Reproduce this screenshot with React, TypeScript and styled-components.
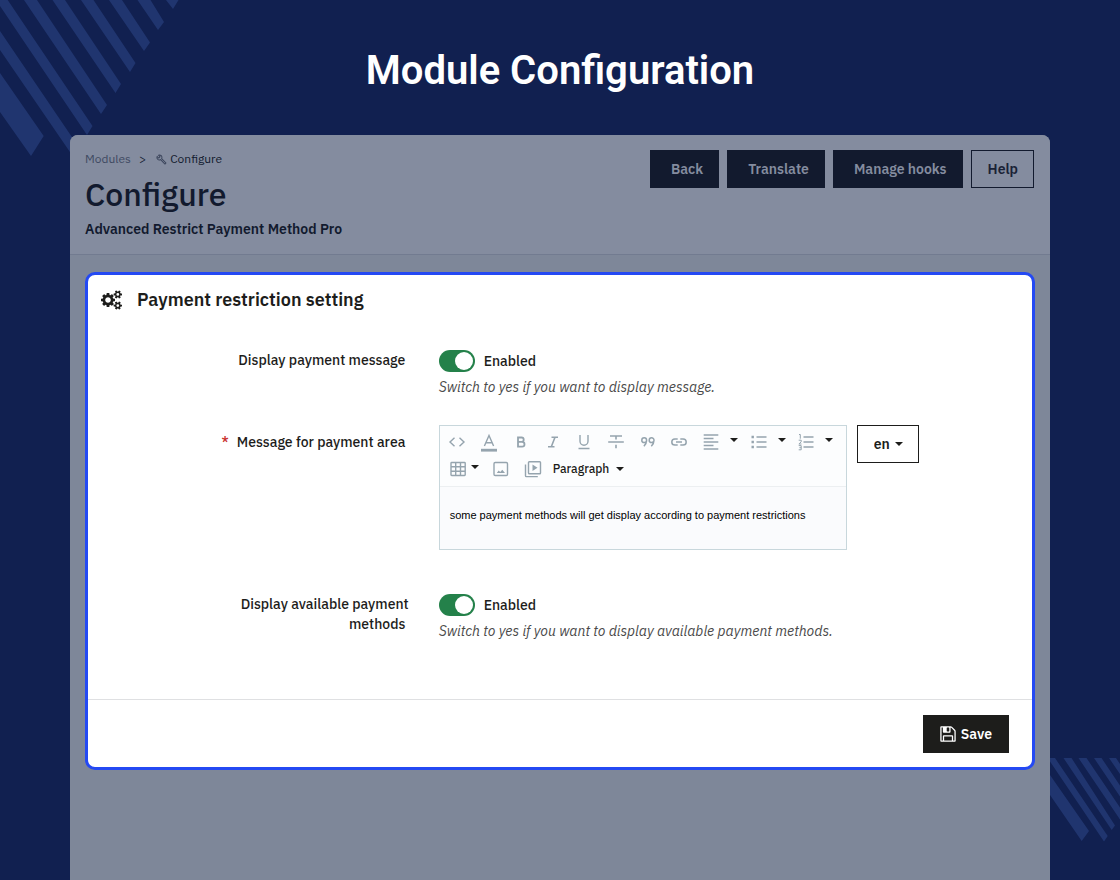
import React from "react";
import styled, { createGlobalStyle } from "styled-components";
import { MdOutlineBuild } from "react-icons/md";

const GlobalStyle = createGlobalStyle`
  *, *::before, *::after { box-sizing: border-box; }
  body {
    margin: 0;
    background: #112050;
    font-family: "IBM Plex Sans", "Noto Sans", sans-serif;
    font-size: 14px;
    line-height: 20px;
    color: #1d1d1b;
  }
  button, input, select, textarea { font: inherit; color: inherit; margin: 0; }
`;

const Page = styled.div`
  position: relative;
  display: flex;
  flex-direction: column;
  min-height: 100vh;
  overflow: hidden;
`;

const Stripes = styled.svg<{ $corner: "left" | "right" }>`
  position: absolute;
  top: ${(p) => (p.$corner === "left" ? "0" : "758px")};
  ${(p) => p.$corner}: 0;
  fill: #20356f;
`;

const Title = styled.h1`
  margin: 0;
  padding: 41px 16px 34px;
  font-family: Roboto, sans-serif;
  font-size: 40px;
  font-weight: 600;
  line-height: 60px;
  text-align: center;
  color: #fff;
`;

const Panel = styled.main`
  position: relative;
  flex: 1;
  margin: 0 70px;
  border-radius: 8px 8px 0 0;
  background: #7e8799;
  overflow: hidden;
`;

const PanelHeader = styled.header`
  display: flex;
  justify-content: space-between;
  align-items: flex-start;
  padding: 14px 16px 15px 15px;
  border-bottom: 1px solid #727b90;
  background: #848c9f;
  color: #121a2e;
`;

const Breadcrumb = styled.nav`
  display: flex;
  align-items: center;
  gap: 8px;
  font-size: 12px;
`;

const CrumbLink = styled.a`
  color: #3f4a62;
  text-decoration: none;
`;

const CrumbCurrent = styled.span`
  display: flex;
  align-items: center;
  gap: 3px;
  padding-left: 2px;

  svg { color: #39435a; }
`;

const PageName = styled.h2`
  margin: 5px 0;
  font-size: 32px;
  font-weight: 500;
  line-height: 40px;
`;

const ModuleName = styled.p`
  margin: 0;
  font-weight: 600;
`;

const Actions = styled.div`
  display: flex;
  gap: 8px;
  padding-top: 1px;
`;

const ActionButton = styled.button<{ $outline?: boolean }>`
  height: 38px;
  padding: ${(p) => (p.$outline ? "0 15px 0 16px" : "0 15px 0 20px")};
  border: 1px solid #121a2e;
  background: ${(p) => (p.$outline ? "transparent" : "#121a2e")};
  color: ${(p) => (p.$outline ? "#1a2236" : "#848c9f")};
  font-weight: 600;
`;

const Card = styled.form`
  margin: 17px 15px;
  border: 3px solid #2449f3;
  border-radius: 10px;
  background: #fff;
`;

const CardTitle = styled.h3`
  display: flex;
  align-items: center;
  gap: 15px;
  margin: 0;
  padding: 0 13px;
  font-size: 18px;
  font-weight: 600;
  line-height: 50px;
`;

const Rows = styled.div`
  display: flex;
  flex-direction: column;
  gap: 27px;
  padding: 25px 0 57px 24px;
`;

const Row = styled.div<{ $tall?: boolean }>`
  display: grid;
  grid-template-columns: 1fr 2fr;
  column-gap: 30px;
  padding-bottom: ${(p) => (p.$tall ? "17px" : "0")};
`;

const FieldLabel = styled.label<{ $tall?: boolean }>`
  justify-self: end;
  max-width: 200px;
  padding-top: ${(p) => (p.$tall ? "7px" : "0")};
  font-weight: 500;
  text-align: right;
`;

const Required = styled.span`
  margin-right: 8px;
  color: #c9302c;
`;

const SwitchLine = styled.label`
  display: flex;
  align-items: center;
  gap: 9px;
  height: 22px;
  font-weight: 500;
`;

const Switch = styled.input`
  appearance: none;
  display: flex;
  align-items: center;
  width: 36px;
  height: 22px;
  padding: 2px;
  border-radius: 11px;
  background: #b3c7cd;

  &::before {
    content: "";
    width: 18px;
    height: 18px;
    border-radius: 50%;
    background: #fff;
  }
  &:checked { justify-content: flex-end; background: #24814a; }
`;

const Help = styled.p`
  margin: 4px 0 0;
  font-style: italic;
  line-height: 22px;
  color: #4a4a4a;
`;

const MessageField = styled.div`
  display: flex;
  align-items: flex-start;
  gap: 10px;
`;

const Editor = styled.div`
  flex: 1;
  max-width: 408px;
  border: 1px solid #c8d7dc;
  background: #fcfdfe;
`;

const Toolbar = styled.div`
  padding: 0 8px 6px 2px;
  border-bottom: 1px solid #eceff1;
  color: #95a4ae;
`;

const ToolGrid = styled.div`
  display: grid;
  grid-template-columns: repeat(25, 1fr);
  height: 32px;
`;

const ToolRow = styled.div`
  display: flex;
  height: 22px;
`;

const Tool = styled.button<{ $menu?: boolean; $fixed?: boolean }>`
  display: flex;
  align-items: center;
  justify-content: ${(p) => (p.$menu ? "flex-start" : "center")};
  gap: ${(p) => (p.$fixed ? "4px" : "10px")};
  grid-column: span ${(p) => (p.$menu ? 3 : 2)};
  width: ${(p) => (p.$fixed ? (p.$menu ? "43px" : "32px") : "auto")};
  padding: 0 0 0 ${(p) => (p.$menu ? "7px" : "0")};
  border: 0;
  background: none;
`;

const Glyph = styled.svg`
  flex: none;
  width: 18px;
  height: 18px;
  fill: none;
  stroke: #95a4ae;
  stroke-width: 1.4;
  overflow: visible;
`;

const CaretShape = styled.svg<{ $raised?: boolean }>`
  flex: none;
  width: 8px;
  height: 4px;
  margin-bottom: ${(p) => (p.$raised ? "4px" : "0")};
  fill: #1d1d1b;
`;

const SelectBox = styled.div<{ $bordered?: boolean }>`
  display: flex;
  align-items: center;
  height: ${(p) => (p.$bordered ? "38px" : "22px")};
  padding: ${(p) => (p.$bordered ? "0 15px 0 16px" : "0 4px")};
  border: ${(p) => (p.$bordered ? "1px solid #1d1d1b" : "0")};
  color: #1d1d1b;
`;

const PlainSelect = styled.select<{ $strong?: boolean }>`
  appearance: none;
  margin-right: ${(p) => (p.$strong ? "4px" : "6px")};
  padding: 0;
  border: 0;
  background: none;
  font-size: ${(p) => (p.$strong ? "14px" : "12px")};
  font-weight: ${(p) => (p.$strong ? 600 : 500)};
`;

const MessageText = styled.textarea`
  display: block;
  width: 100%;
  height: 62px;
  padding: 18px 10px;
  border: 0;
  resize: none;
  background: #fafbfd;
  color: #000;
  font-family: "Liberation Sans", Arial, sans-serif;
  font-size: 11px;
  line-height: 20px;
`;

const CardFooter = styled.footer`
  display: flex;
  justify-content: flex-end;
  padding: 15px 23px 14px;
  border-top: 1px solid #dfe0e2;
`;

const SaveButton = styled.button`
  display: flex;
  align-items: center;
  gap: 5px;
  height: 38px;
  padding: 0 16px;
  border: 1px solid #1d1d1b;
  background: #1d1d1b;
  color: #fff;
  font-weight: 600;
`;

const Caret = ({ raised }: { raised?: boolean }) => (
  <CaretShape $raised={raised} viewBox="0 0 8 4" aria-hidden="true">
    <path d="M0 0h8L4 4z" />
  </CaretShape>
);

const smallGear =
  "v140q0 16-149 31-12 27-30 52 51 113 51 138 0 4-4 7-122 71-124 71-8 0-46-47t-52-68q-20 2-30 2t-30-2q-14 21-52 68t-46 47q-2 0-124-71-4-3-4-7 0-25 51-138-18-25-30-52-149-15-149-31v-140q0-16 149-31 13-29 30-52-51-113-51-138 0-4 4-7 4-2 35-20t59-34 30-16q8 0 46 46.500t52 67.500q20-2 30-2t30 2q51-71 92-112l6-2q4 0 124 70 4 3 4 7 0 25-51 138 17 23 30 52 149 15 149 31z";

const Cogs = () => (
  <svg width="21" height="20" viewBox="0 0 1920 1792" fill="currentColor" fillRule="evenodd" aria-hidden="true">
    <path d="M896 896q0-106-75-181t-181-75-181 75-75 181 75 181 181 75 181-75 75-181zM1280 805v185q0 10-7 19.500t-16 10.500l-155 24q-11 35-32 76 34 48 90 115 7 11 7 20 0 12-7 19-23 30-82.500 89.500t-78.500 59.500q-11 0-21-7l-115-90q-37 19-77 31-11 108-23 155-7 24-30 24h-186q-11 0-20-7.500t-10-17.500l-23-153q-34-10-75-31l-118 89q-7 7-20 7-11 0-21-8-144-133-144-160 0-9 7-19 10-14 41-53t47-61q-23-44-35-82l-152-24q-10-1-17-9.500t-7-19.500v-185q0-10 7-19.500t16-10.500l155-24q11-35 32-76-34-48-90-115-7-11-7-20 0-12 7-20 22-30 82-89t79-59q11 0 21 7l115 90q34-18 77-32 11-108 23-154 7-24 30-24h186q11 0 20 7.500t10 17.500l23 153q34 10 75 31l118-89q8-7 20-7 11 0 21 8 144 133 144 160 0 8-7 19-12 16-42 54t-45 60q23 48 34 82l152 23q10 2 17 10.500t7 19.500z" />
    <path d={`M1664 1408a128 128 0 1 0-256 0a128 128 0 0 0 256 0zM1920 1338${smallGear}`} />
    <path d={`M1664 384a128 128 0 1 0-256 0a128 128 0 0 0 256 0zM1920 314${smallGear}`} />
  </svg>
);

type ToolItem = { name: string; menu?: boolean; art: React.ReactNode };

const mainTools: ToolItem[] = [
  { name: "Source code", art: <path d="M6.500 4.700L2 9l4.500 4.300M11.500 4.700L16 9l-4.500 4.300" /> },
  {
    name: "Text color",
    art: (
      <>
        <path d="M4.400 13L9 2.500 13.600 13M6 9.700h6" />
        <path d="M1 17.200h16" strokeWidth="2.800" />
      </>
    ),
  },
  {
    name: "Bold",
    art: <path strokeWidth="1.800" d="M6 4.500h3.500a2.200 2.200 0 0 1 0 4.400H6zM6 8.900h4.100a2.400 2.400 0 0 1 0 4.800H6z" />,
  },
  { name: "Italic", art: <path strokeWidth="1.600" d="M7.500 4.300H14M4 13.700h6.500M11 4.300L7.300 13.700" /> },
  { name: "Underline", art: <path d="M5 2v6.200a4 4 0 0 0 8 0V2M3.500 15.500h11" /> },
  { name: "Strikethrough", art: <path strokeWidth="1.600" d="M3 3h12M9 3v3.500M1.200 9h15.600M9 11.700v3.500" /> },
  {
    name: "Blockquote",
    art: (
      <path
        strokeWidth="1.500"
        d="M7.600 7.200a2.400 2.400 0 1 0-4.800 0a2.400 2.400 0 0 0 4.800 0c0 2.500-1 4.300-2.700 6M15 7.200a2.400 2.400 0 1 0-4.800 0a2.400 2.400 0 0 0 4.800 0c0 2.500-1 4.300-2.700 6"
      />
    ),
  },
  {
    name: "Link",
    art: <path strokeWidth="1.500" d="M7.700 5.900H4.900a3.100 3.100 0 0 0 0 6.200h2.800M10.300 5.900h2.800a3.100 3.100 0 0 1 0 6.200h-2.800M6 9h6" />,
  },
  { name: "Align", menu: true, art: <path d="M1.700 2h14.600M1.700 5.500h9.800M1.700 9h14.600M1.700 12.500h9.800M1.700 16h14.600" /> },
  {
    name: "Bullet list",
    menu: true,
    art: (
      <>
        <path d="M6.500 4h10M6.500 9h10M6.500 14h10" />
        <path strokeWidth="2.400" d="M1.500 4h2.400M1.500 9h2.400M1.500 14h2.400" />
      </>
    ),
  },
  {
    name: "Numbered list",
    menu: true,
    art: (
      <>
        <path d="M6.500 4h10M6.500 9h10M6.500 14h10" />
        <path
          strokeWidth="1"
          d="M2 1.500h1.300v4.200M1.700 7.200h2.500v1.600l-2.300 2.200h2.600M1.700 12.600h2.500v4.200H1.700M2.400 14.700h1.800"
        />
      </>
    ),
  },
];

const insertTools: ToolItem[] = [
  {
    name: "Table",
    menu: true,
    art: <path d="M2.700 2.500h12.800a.7.7 0 0 1 .7.7v11.600a.7.7 0 0 1-.7.7H2.700a.7.7 0 0 1-.7-.7V3.200a.7.7 0 0 1 .7-.7zM2 6.800h14.200M2 11.200h14.200M6.700 2.500v13M11.500 2.500v13" />,
  },
  {
    name: "Image",
    art: (
      <>
        <rect x="2" y="2.500" width="13.500" height="13" rx="1.200" />
        <path stroke="none" fill="#95a4ae" d="M4.800 13l1.900-2.600 1.500 1.600 2.100-2.300 2.700 3.300z" />
      </>
    ),
  },
  {
    name: "Media",
    art: (
      <>
        <rect x="4.500" y="1.700" width="12" height="12" rx="0.800" />
        <path d="M1.500 4.500v11.300a.8.8 0 0 0 .8.8h11.500" />
        <path stroke="none" fill="#95a4ae" d="M8.500 4.500v6.400l5-3.200z" />
      </>
    ),
  },
];

const ToolButtons = ({ items, fixed }: { items: ToolItem[]; fixed?: boolean }) => (
  <>
    {items.map((item) => (
      <Tool key={item.name} type="button" aria-label={item.name} $menu={item.menu} $fixed={fixed}>
        <Glyph viewBox="0 0 18 18" aria-hidden="true">
          {item.art}
        </Glyph>
        {item.menu && <Caret raised />}
      </Tool>
    ))}
  </>
);

const SwitchRow = ({ id, label, help }: { id: string; label: string; help: string }) => (
  <Row>
    <FieldLabel htmlFor={id}>{label}&nbsp;</FieldLabel>
    <div>
      <SwitchLine>
        <Switch id={id} type="checkbox" defaultChecked />
        Enabled
      </SwitchLine>
      <Help>{help}</Help>
    </div>
  </Row>
);

export default function App() {
  return (
    <Page>
      <GlobalStyle />
      <Stripes $corner="left" width="180" height="160" viewBox="0 0 180 160" aria-hidden="true">
        <path d="M0 73L43.700 136 31 156 0 112zM0 31L78 146 72 155 0 50zM0 0H7.700L92.500 126 87 135 0 6zM24 0H37L107 105 101 114zM52.500 0H65L121 84 115.500 93zM81 0H93.500L135.500 63 130 72zM109 0H122L150 42.500 144 51zM137.500 0H150.500L164 22 158 30zM166 0H178.500L173 9z" />
      </Stripes>
      <Stripes $corner="right" width="70" height="84" viewBox="0 0 70 84" aria-hidden="true">
        <path d="M0 17L39 73 31.700 83 0 37zM0 0H5L57.700 78 54 83.500 0 3.500zM13.500 0H21.500L65 67.500 61.700 72zM28.500 0H36.500L70 49.600V61.500zM44 0H51.500L70 27.400V38.500zM59 0H66L70 6V16z" />
      </Stripes>

      <Title>Module Configuration</Title>

      <Panel>
        <PanelHeader>
          <div>
            <Breadcrumb aria-label="Breadcrumb">
              <CrumbLink href="#modules">Modules</CrumbLink>
              <span>&gt;</span>
              <CrumbCurrent>
                <MdOutlineBuild size={11} aria-hidden="true" />
                Configure
              </CrumbCurrent>
            </Breadcrumb>
            <PageName>Configure</PageName>
            <ModuleName>Advanced Restrict Payment Method Pro</ModuleName>
          </div>
          <Actions>
            <ActionButton type="button">Back</ActionButton>
            <ActionButton type="button">Translate</ActionButton>
            <ActionButton type="button">Manage hooks</ActionButton>
            <ActionButton type="button" $outline>
              Help
            </ActionButton>
          </Actions>
        </PanelHeader>

        <Card onSubmit={(e) => e.preventDefault()}>
          <CardTitle>
            <Cogs />
            Payment restriction setting
          </CardTitle>
          <Rows>
            <SwitchRow
              id="display-message"
              label="Display payment message"
              help="Switch to yes if you want to display message."
            />
            <Row $tall>
              <FieldLabel htmlFor="message" $tall>
                <Required>*</Required>
                Message for payment area&nbsp;
              </FieldLabel>
              <MessageField>
                <Editor>
                  <Toolbar>
                    <ToolGrid>
                      <ToolButtons items={mainTools} />
                    </ToolGrid>
                    <ToolRow>
                      <ToolButtons items={insertTools} fixed />
                      <SelectBox>
                        <PlainSelect aria-label="Text format">
                          <option>Paragraph</option>
                        </PlainSelect>
                        <Caret />
                      </SelectBox>
                    </ToolRow>
                  </Toolbar>
                  <MessageText
                    id="message"
                    defaultValue="some payment methods will get display according to payment restrictions"
                  />
                </Editor>
                <SelectBox $bordered>
                  <PlainSelect aria-label="Language" $strong>
                    <option>en</option>
                  </PlainSelect>
                  <Caret />
                </SelectBox>
              </MessageField>
            </Row>
            <SwitchRow
              id="display-methods"
              label="Display available payment methods"
              help="Switch to yes if you want to display available payment methods."
            />
          </Rows>
          <CardFooter>
            <SaveButton type="submit">
              <svg width="16" height="18" viewBox="0 0 1536 1792" fill="currentColor" aria-hidden="true">
                <path d="M384 1536h768v-384H384v384zm896 0h128V640q0-14-10-38.500t-20-34.500l-281-281q-10-10-34-20t-39-10v416q0 40-28 68t-68 28H352q-40 0-68-28t-28-68V256H128v1280h128v-416q0-40 28-68t68-28h832q40 0 68 28t28 68v416zM896 608V288q0-13-9.500-22.500T864 256H672q-13 0-22.500 9.500T640 288v320q0 13 9.500 22.500T672 640h192q13 0 22.500-9.500T896 608zm640 32v928q0 40-28 68t-68 28H96q-40 0-68-28t-28-68V224q0-40 28-68t68-28h928q40 0 88 20t76 48l280 280q28 28 48 76t20 88z" />
              </svg>
              Save
            </SaveButton>
          </CardFooter>
        </Card>
      </Panel>
    </Page>
  );
}
